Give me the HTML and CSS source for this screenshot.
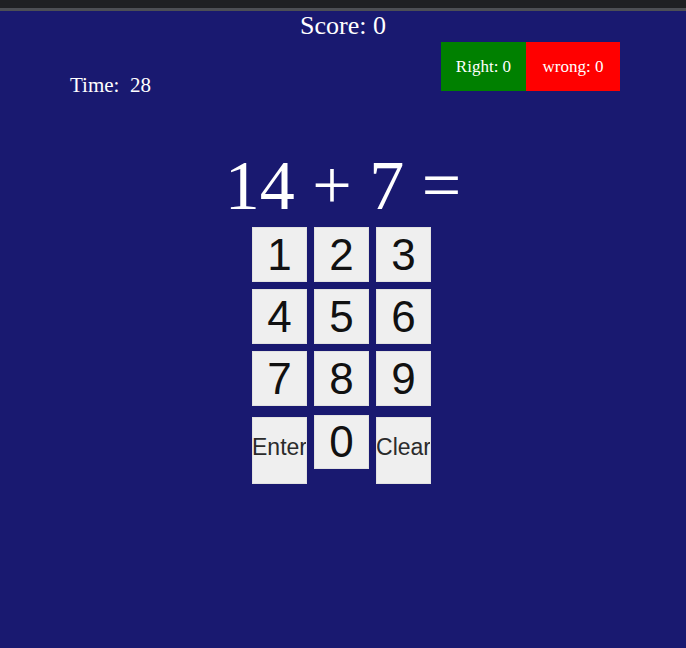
FILE: index.html
```html
<!DOCTYPE html>
<html lang="en">
<head>
<meta charset="utf-8">
<title>Math Game</title>
<link rel="stylesheet" href="styles.css">
</head>
<body>
<div class="chrome"></div>
<main class="game">
  <div class="score">Score: 0</div>
  <div class="status">
    <div class="time">Time:  28</div>
    <div class="tally">
      <span class="right">Right: 0</span>
      <span class="wrong">wrong: 0</span>
    </div>
  </div>
  <div class="question">14 + 7 =</div>
  <div class="keypad">
    <button class="key">1</button>
    <button class="key">2</button>
    <button class="key">3</button>
    <button class="key">4</button>
    <button class="key">5</button>
    <button class="key">6</button>
    <button class="key">7</button>
    <button class="key">8</button>
    <button class="key">9</button>
    <button class="key key-word">Enter</button>
    <button class="key key-zero">0</button>
    <button class="key key-word">Clear</button>
  </div>
</main>
</body>
</html>
```

FILE: styles.css
```css
html, body {
  margin: 0;
  padding: 0;
}

body {
  background: #191970;
  font-family: "Liberation Serif", "Times New Roman", serif;
  color: #ffffff;
  width: 686px;
  height: 648px;
  overflow: hidden;
}

.chrome {
  height: 8px;
  background: #1f2023;
  border-bottom: 3px solid #4d4f54;
}

.score {
  padding-top: 2px;
  font-size: 26px;
  line-height: 26px;
  text-align: center;
}

.status {
  margin-top: 3px;
  display: flex;
  justify-content: space-between;
  align-items: flex-start;
  padding: 0 66px 0 70px;
}

.time {
  margin-top: 31px;
  font-size: 21px;
  line-height: 24px;
  white-space: pre;
}

.tally {
  display: flex;
  height: 49px;
}

.tally span {
  display: block;
  font-size: 17px;
  line-height: 49px;
  text-align: center;
  color: #ffffff;
}

.right {
  width: 85px;
  background: #008000;
}

.wrong {
  width: 94px;
  background: #ff0000;
}

.question {
  margin-top: 49px;
  font-size: 70px;
  line-height: 80px;
  text-align: center;
}

.keypad {
  margin-top: 1px;
  padding-right: 3px;
  display: grid;
  grid-template-columns: repeat(3, 55px);
  grid-auto-rows: auto;
  column-gap: 7px;
  row-gap: 7px;
  justify-content: center;
  align-items: start;
}

.key {
  width: 55px;
  height: 55px;
  margin: 0;
  padding: 0;
  background: #efefef;
  border: 1px solid #e2e2e2;
  border-radius: 0;
  font-family: "Liberation Sans", Arial, sans-serif;
  font-size: 44px;
  line-height: 1;
  color: #111111;
  overflow: hidden;
  display: flex;
  align-items: center;
  justify-content: center;
}

.key-word {
  margin-top: 4px;
  height: 67px;
  font-size: 23px;
  color: #2b2b2b;
  padding-bottom: 6px;
  white-space: nowrap;
}

.key-zero {
  margin-top: 2px;
  height: 54px;
}
```
